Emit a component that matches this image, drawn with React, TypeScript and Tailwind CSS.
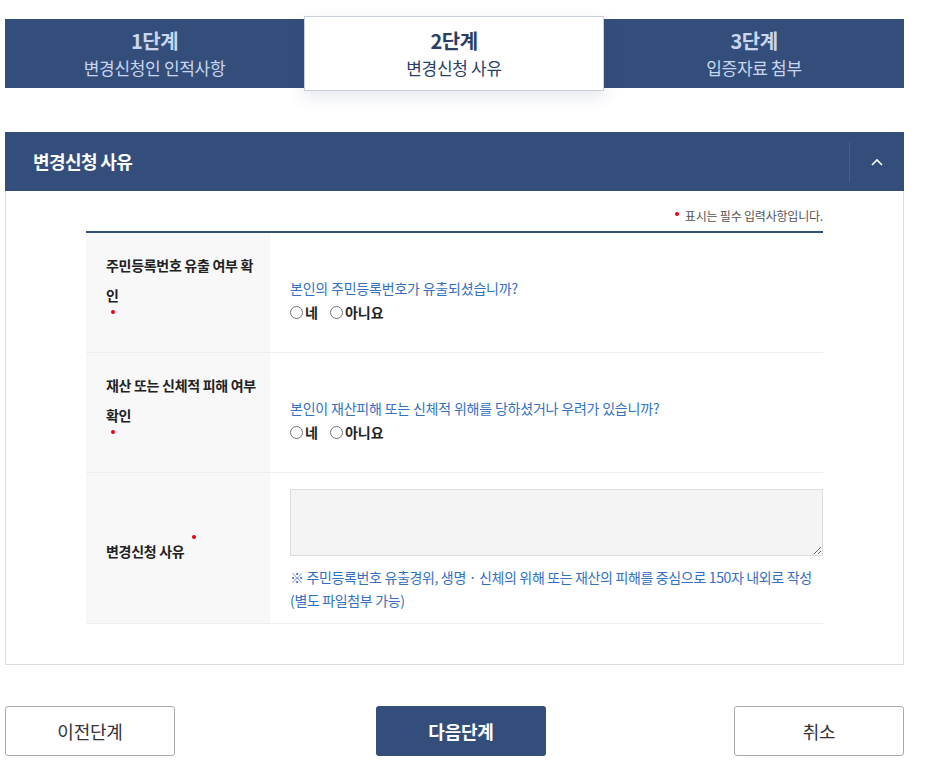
import { useState } from "react";

const font = {
  fontFamily: '"Noto Sans CJK KR", "Noto Sans", sans-serif',
};

const steps = [
  { no: "1단계", title: "변경신청인 인적사항" },
  { no: "2단계", title: "변경신청 사유" },
  { no: "3단계", title: "입증자료 첨부" },
];

const RedDot = ({ className = "" }: { className?: string }) => (
  <span className={`w-[4px] h-[4px] rounded-full bg-[#e60012] ${className}`} />
);

const YesNo = ({ name }: { name: string }) => (
  <div className="flex items-center text-[14px] font-bold text-[#222] leading-[24px]">
    <label className="flex items-center mr-[12px]">
      <input type="radio" name={name} className="w-[13px] h-[13px] m-0 mr-[2px]" />
      <span>네</span>
    </label>
    <label className="flex items-center">
      <input type="radio" name={name} className="w-[13px] h-[13px] m-0 mr-[2px]" />
      <span>아니요</span>
    </label>
  </div>
);

const Question = ({ label, question, name }: { label: string; question: string; name: string }) => (
  <div className="flex h-[120px] border-b border-[#eeeeee]">
    <div className="w-[184px] shrink-0 bg-[#f8f8f8] pl-5 pr-[8px] pt-[17px] text-[14px] font-bold leading-[30px] text-[#222] tracking-[-0.3px]">
      <div>{label}</div>
      <div className="pl-[5px] pt-[-1px]">
        <RedDot className="block" />
      </div>
    </div>
    <div className="px-5 pt-[43px]">
      <p className="text-[14px] leading-[24px] text-[#3470c2] tracking-[-0.2px]">{question}</p>
      <YesNo name={name} />
    </div>
  </div>
);

export default function App() {
  const [open, setOpen] = useState(true);

  return (
    <div style={font} className="bg-white min-h-[784px] pt-[19px] px-[5px]">
      <div className="w-[899px]">
        <div className="flex h-[69px] bg-[#344e7b]">
          {steps.map((s, i) =>
            i === 1 ? (
              <div
                key={s.no}
                className="w-[300px] -my-[3px] flex flex-col items-center justify-center bg-white border border-[#c8cfdd] shadow-[0_6px_16px_rgba(40,60,110,0.12)] relative z-10"
              >
                <span className="text-[20px] font-bold leading-[27px] text-[#2b3f66] tracking-[-0.5px]">{s.no}</span>
                <span className="text-[17px] leading-[27px] text-[#2b3f66] tracking-[-0.3px]">{s.title}</span>
              </div>
            ) : (
              <div key={s.no} className={`${i === 0 ? "w-[299px]" : "w-[300px]"} flex flex-col items-center justify-center`}>
                <span className="text-[20px] font-bold leading-[27px] text-[#c9d6ee] tracking-[-0.5px]">{s.no}</span>
                <span className="text-[17px] leading-[27px] text-[#c9d6ee] tracking-[-0.3px]">{s.title}</span>
              </div>
            )
          )}
        </div>

        <div className="mt-[44px] h-[59px] bg-[#344e7b] flex items-center justify-between">
          <h2 className="pl-[28px] text-[18px] font-bold text-white tracking-[-0.6px]">변경신청 사유</h2>
          <button
            className="w-[55px] h-[40px] border-l border-white/10 flex items-center justify-center"
            onClick={() => setOpen(!open)}
          >
            <svg width="14" height="10" viewBox="0 0 14 10" fill="none">
              <polyline points="2,8 7,3 12,8" stroke="white" strokeWidth="1.6" />
            </svg>
          </button>
        </div>

        {open && (
          <div className="border border-t-0 border-[#dddddd] px-[80px] pt-[17px] pb-[40px]">
            <p className="text-right text-[12px] leading-[16px] text-[#555] tracking-[-0.2px] mb-[7px]">
              <RedDot className="inline-block mr-[6px] relative top-[-5px]" />
              표시는 필수 입력사항입니다.
            </p>
            <div className="border-t-2 border-[#344e7b]">
              <Question
                name="leak"
                label="주민등록번호 유출 여부 확인"
                question="본인의 주민등록번호가 유출되셨습니까?"
              />
              <Question
                name="harm"
                label="재산 또는 신체적 피해 여부 확인"
                question="본인이 재산피해 또는 신체적 위해를 당하셨거나 우려가 있습니까?"
              />

              <div className="flex h-[151px] border-b border-[#eeeeee]">
                <div className="w-[184px] shrink-0 bg-[#f8f8f8] pl-5 pr-[8px] pt-[6px] flex items-center text-[14px] font-bold leading-[30px] text-[#222] tracking-[-0.3px]">
                  <span>
                    변경신청 사유 <RedDot className="inline-block ml-[5px] relative top-[-18px]" />
                  </span>
                </div>
                <div className="flex-1 pl-5 pt-[16px]">
                  <textarea className="block w-full h-[67px] bg-[#f4f4f4] border border-[#dddddd] outline-none p-2 text-[14px]" />
                  <p className="mt-[10px] text-[14px] leading-[23px] text-[#3470c2] tracking-[-0.35px]">
                    ※ 주민등록번호 유출경위, 생명 · 신체의 위해 또는 재산의 피해를 중심으로 150자 내외로 작성 (별도 파일첨부 가능)
                  </p>
                </div>
              </div>
            </div>
          </div>
        )}

        <div className="mt-[41px] flex">
          <button className="w-[170px] h-[50px] bg-white border border-[#aaaaaa] rounded-[3px] text-[18px] text-[#333] tracking-[-0.2px]">
            이전단계
          </button>
          <button className="ml-[201px] w-[170px] h-[50px] bg-[#344e7b] rounded-[3px] text-[18px] font-bold text-white tracking-[-0.2px]">
            다음단계
          </button>
          <button className="ml-auto w-[170px] h-[50px] bg-white border border-[#aaaaaa] rounded-[3px] text-[18px] text-[#333] tracking-[-0.2px]">
            취소
          </button>
        </div>
      </div>
    </div>
  );
}
